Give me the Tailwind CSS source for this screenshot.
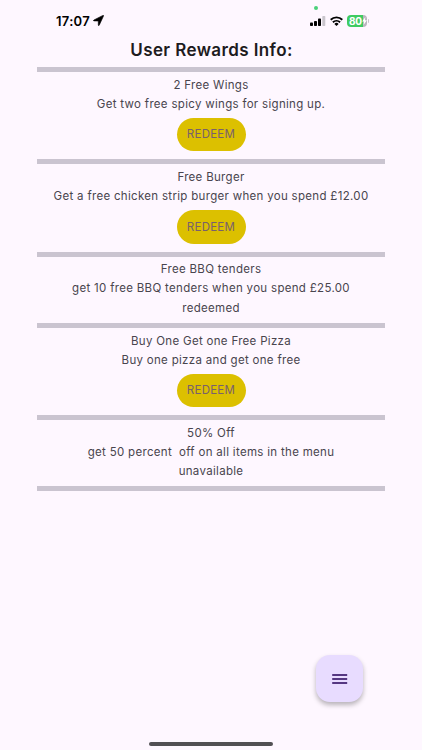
<!DOCTYPE html>
<html lang="en">
<head>
    <meta charset="UTF-8">
    <meta name="viewport" content="width=device-width, initial-scale=1.0">
    <title>User Rewards</title>
    <script src="https://cdn.jsdelivr.net/npm/@tailwindcss/browser@4"></script>
</head>
<body class="bg-[#fef7ff] font-['Inter',sans-serif] text-[#49454e]">
<div class="relative h-[750px] overflow-hidden flex flex-col">
    <!-- Status bar -->
    <header class="h-[39px] shrink-0 pl-14 pr-[53px] pt-[2px] flex items-center justify-between text-black">
        <div class="flex items-center gap-[3px]">
            <span class="text-[13px] font-semibold leading-4 tracking-[0.3px]">17:07</span>
            <svg class="w-[11px] h-[11px]" viewBox="0 0 11 11"><path d="M10.600.8 6.200 10.300q-.7 1-.9-.2V6L1 5.900q-1.200-.2-.1-.9L9.900.4q.9-.3.7.4Z" fill="currentColor" stroke="currentColor" stroke-width=".6"/></svg>
        </div>
        <div class="flex items-center">
            <svg class="w-4 h-[10px]" viewBox="0 0 16 10">
                <rect x="0" y="6.500" width="3" height="3.500" rx=".8"/>
                <rect x="4" y="5" width="3" height="5" rx=".8"/>
                <rect x="8" y="2.500" width="3" height="7.500" rx=".8"/>
                <rect x="12.300" y="0" width="3" height="10" rx=".8" fill="#c9c5cc"/>
            </svg>
            <svg class="w-[13px] h-[10px] ml-[4px]" viewBox="0 0 13 10" fill="none" stroke="currentColor" stroke-width="1.900">
                <path d="M.7 3.700a8.300 8.300 0 0 1 11.600 0M2.900 6.300a5.200 5.200 0 0 1 7.200 0"/>
                <path d="M6.500 10 4.400 7.900a2.900 2.900 0 0 1 4.200 0Z" fill="currentColor" stroke="none"/>
            </svg>
            <div class="ml-[4px] w-[20px] h-[12px] rounded-[4px] bg-linear-to-r from-[#3fcb62] from-80% to-[#b9b5bd] to-80% flex items-center pl-[2px] text-white">
                <span class="text-[10px] font-bold leading-3 tracking-[-0.3px]">80</span>
                <svg class="w-[5px] h-[8px] shrink-0" viewBox="0 0 5 8"><path d="M3.300 0 .2 4.600h1.900L1.600 8 4.900 3.300H3Z" fill="#fff"/></svg>
            </div>
            <div class="ml-px w-px h-1 rounded-r bg-[#c9c5cc]"></div>
        </div>
        <div class="absolute left-[314px] top-[6px] size-[4px] rounded-full bg-[#4bd07a]"></div>
    </header>

    <!-- Rewards -->
    <main class="mx-[37.4px] text-center text-[11.5px] leading-[19.2px] tracking-[0.31px]">
        <h1 class="h-[28px] pl-[1px] text-[17px] font-semibold leading-[22px] tracking-[0.4px] text-[#1d1b20]">User Rewards Info:</h1>
        <section class="h-[92.3px] border-t-5 border-[#cac4d0] pt-[3.7px]">
            <h2>2 Free Wings</h2>
            <p>Get two free spicy wings for signing up.</p>
            <button class="block mx-auto mt-[3.8px] w-[69px] h-[33.4px] pt-px rounded-full bg-[#dcc000] text-[#79606c] tracking-[0.25px]">REDEEM</button>
        </section>
        <section class="h-[92.3px] border-t-5 border-[#cac4d0] pt-[3.7px]">
            <h2>Free Burger</h2>
            <p>Get a free chicken strip burger when you spend £12.00</p>
            <button class="block mx-auto mt-[3.8px] w-[69px] h-[33.4px] pt-px rounded-full bg-[#dcc000] text-[#79606c] tracking-[0.25px]">REDEEM</button>
        </section>
        <section class="h-[71.3px] border-t-5 border-[#cac4d0] pt-[3.7px]">
            <h2>Free BBQ tenders</h2>
            <p>get 10 free BBQ tenders when you spend £25.00</p>
            <p>redeemed</p>
        </section>
        <section class="h-[92.3px] border-t-5 border-[#cac4d0] pt-[3.7px]">
            <h2>Buy One Get one Free Pizza</h2>
            <p>Buy one pizza and get one free</p>
            <button class="block mx-auto mt-[3.8px] w-[69px] h-[33.4px] pt-px rounded-full bg-[#dcc000] text-[#79606c] tracking-[0.25px]">REDEEM</button>
        </section>
        <section class="h-[76.3px] border-y-5 border-[#cac4d0] pt-[3.7px]">
            <h2>50% Off</h2>
            <p class="whitespace-pre">get 50 percent  off on all items in the menu</p>
            <p>unavailable</p>
        </section>
    </main>

    <!-- Menu button -->
    <button class="absolute left-[316px] top-[655px] size-[47px] rounded-[14px] bg-[#e8dcff] shadow-[0_3px_5px_rgba(0,0,0,0.28)] flex items-center justify-center">
        <svg class="w-4 h-3" viewBox="0 0 16 12" stroke="#25005a" stroke-width="1.500"><path d="M.2 2h15M.2 6h15M.2 10h15"/></svg>
    </button>

    <!-- Home indicator -->
    <div class="absolute left-[149px] top-[741.500px] w-[124px] h-[4px] rounded-full bg-[#525054]"></div>
</div>
</body>
</html>
